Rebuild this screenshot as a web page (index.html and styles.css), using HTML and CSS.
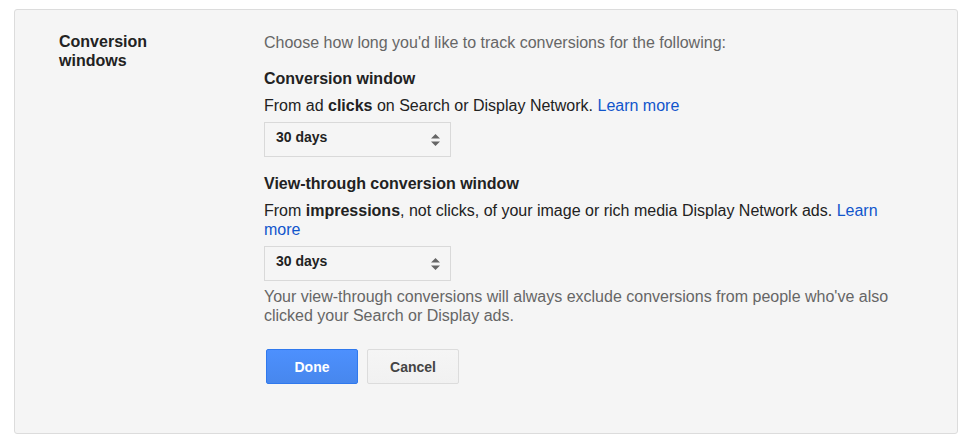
FILE: index.html
```html
<!DOCTYPE html>
<html>
	<head>
		<meta charset="UTF-8">
		<title>Conversion windows</title>
		<link rel="stylesheet" href="styles.css">
	</head>
	<body>
		<div class="page">
			<div class="panel">
				<div class="label">Conversion windows</div>
				<div class="fields">
					<p class="intro">Choose how long you'd like to track conversions for the following:</p>

					<h3 class="heading">Conversion window</h3>
					<p class="desc">From ad <b>clicks</b> on Search or Display Network. <a href="#">Learn more</a></p>
					<div class="select">
						<span>30 days</span>
						<svg width="9" height="12" viewBox="0 0 9 12"><path d="M4.5 0 L9 4.5 L0 4.5 Z M0 7.5 L9 7.5 L4.5 12 Z" fill="#666"/></svg>
					</div>

					<h3 class="heading second">View-through conversion window</h3>
					<p class="desc">From <b>impressions</b>, not clicks, of your image or rich media Display Network ads. <a href="#">Learn more</a></p>
					<div class="select">
						<span>30 days</span>
						<svg width="9" height="12" viewBox="0 0 9 12"><path d="M4.5 0 L9 4.5 L0 4.5 Z M0 7.5 L9 7.5 L4.5 12 Z" fill="#666"/></svg>
					</div>
					<p class="note">Your view-through conversions will always exclude conversions from people who've also clicked your Search or Display ads.</p>

					<div class="buttons">
						<button class="btn btn-primary">Done</button>
						<button class="btn">Cancel</button>
					</div>
				</div>
			</div>
		</div>
	</body>
</html>
```

FILE: styles.css
```css
body {
	margin: 0;
	padding: 0;
	background: #fff;
	font-family: "Liberation Sans", Arial, sans-serif;
	font-size: 16px;
	line-height: 19px;
	color: #222;
}

.page {
	padding: 9px 16px 9px 14px;
}

.panel {
	display: grid;
	grid-template-columns: 205px 640px;
	height: 425px;
	box-sizing: border-box;
	padding: 23px 0 0 44px;
	background: #f5f5f5;
	border: 1px solid #dcdcdc;
	border-radius: 3px;
}

.label {
	font-weight: bold;
	color: #222;
	padding-right: 100px;
	margin-top: -1px;
}

.fields p {
	margin: 0;
}

.intro {
	color: #666;
}

.heading {
	margin: 17px 0 0;
	font-size: 16px;
	font-weight: bold;
	color: #222;
}

.heading.second {
	margin-top: 17px;
}

.desc {
	margin-top: 8px !important;
}

a {
	color: #15c;
	text-decoration: none;
}

.select {
	display: flex;
	justify-content: space-between;
	align-items: flex-start;
	width: 187px;
	height: 35px;
	box-sizing: border-box;
	margin-top: 7px;
	padding: 5px 10px 0 11px;
	border: 1px solid #d9d9d9;
	background: #f5f5f5;
	font-size: 14px;
	font-weight: bold;
	color: #222;
}

.select svg {
	margin-top: 6px;
}

.note {
	margin-top: 6px !important;
	color: #666;
}

.buttons {
	display: flex;
	gap: 9px;
	margin-top: 24px;
	padding-left: 2px;
}

.btn {
	width: 92px;
	height: 35px;
	font-family: "Liberation Sans", Arial, sans-serif;
	font-size: 14px;
	font-weight: bold;
	color: #444;
	background: linear-gradient(#f5f5f5, #f1f1f1);
	border: 1px solid #dcdcdc;
	border-radius: 2px;
}

.btn-primary {
	color: #fff;
	background: linear-gradient(#4d90fe, #4787ed);
	border-color: #3079ed;
}
```
